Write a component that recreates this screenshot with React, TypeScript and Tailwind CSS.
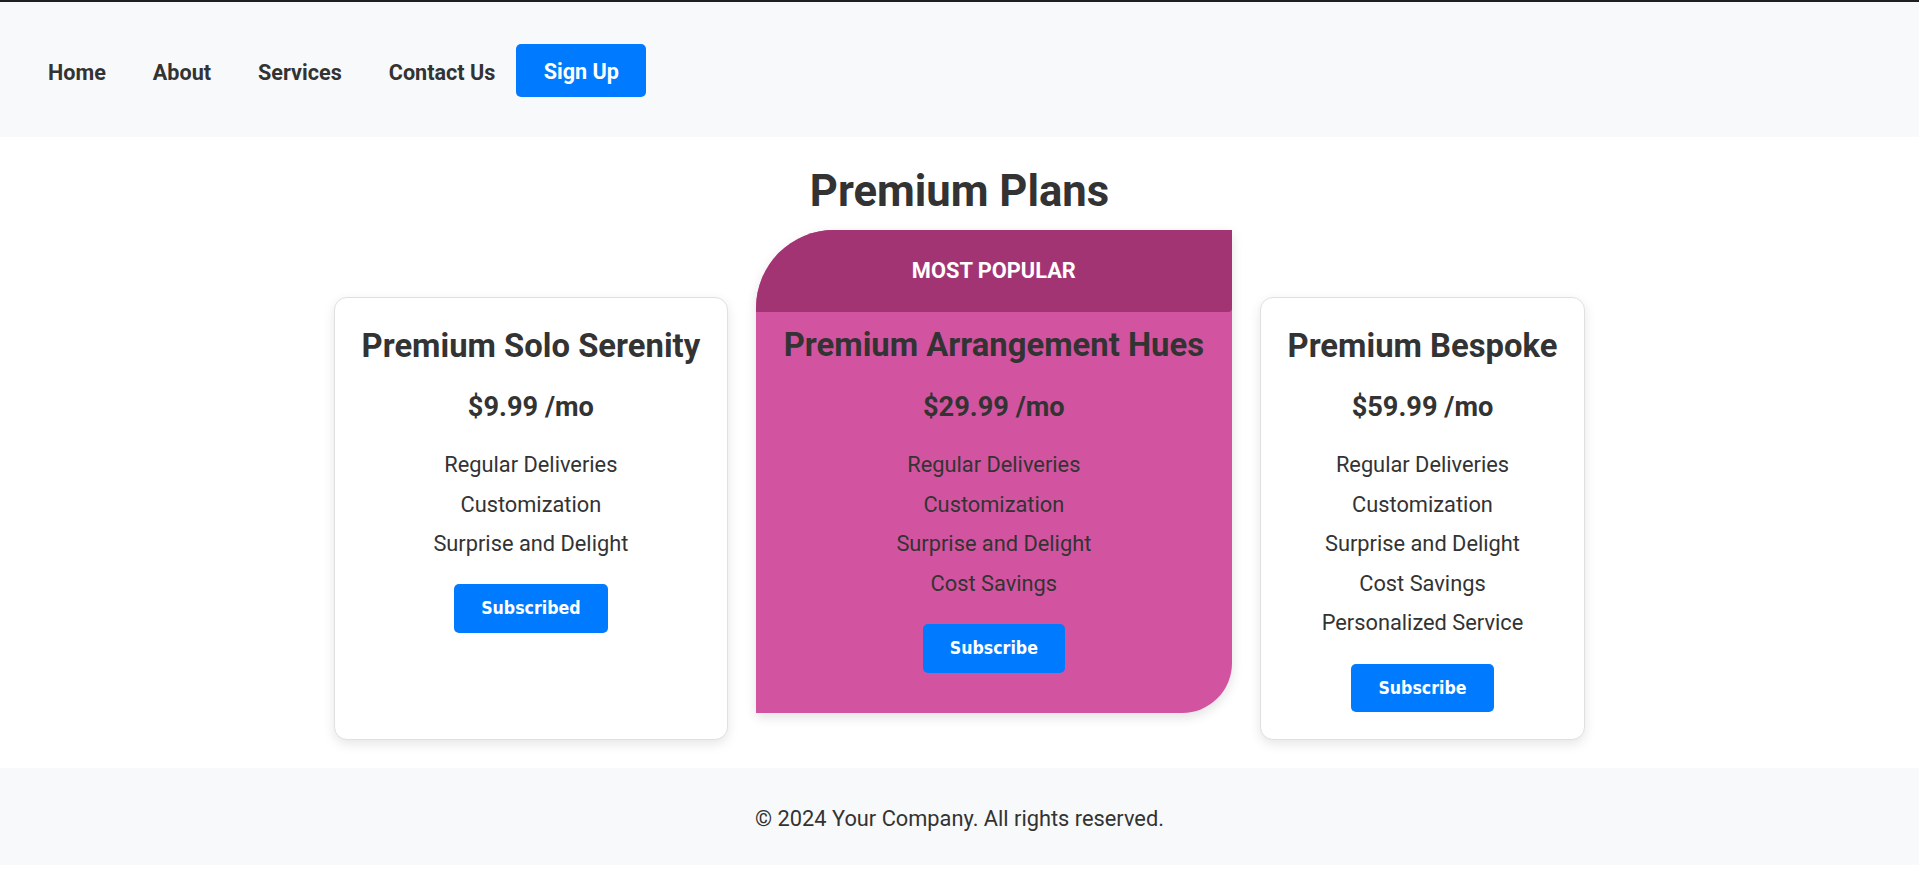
import React from 'react';

interface Plan {
  name: string;
  price: string;
  features: string[];
  button: string;
  popular?: boolean;
}

const plans: Plan[] = [
  {
    name: 'Premium Solo Serenity',
    price: '$9.99 /mo',
    features: ['Regular Deliveries', 'Customization', 'Surprise and Delight'],
    button: 'Subscribed',
  },
  {
    name: 'Premium Arrangement Hues',
    price: '$29.99 /mo',
    features: ['Regular Deliveries', 'Customization', 'Surprise and Delight', 'Cost Savings'],
    button: 'Subscribe',
    popular: true,
  },
  {
    name: 'Premium Bespoke',
    price: '$59.99 /mo',
    features: ['Regular Deliveries', 'Customization', 'Surprise and Delight', 'Cost Savings', 'Personalized Service'],
    button: 'Subscribe',
  },
];

function PlanBody({ plan }: { plan: Plan }) {
  return (
    <>
      <h3 className="text-[32.8px] font-bold leading-[38px] whitespace-nowrap">{plan.name}</h3>
      <p className="mt-[27.7px] text-[27.2px] font-bold leading-[31.6px]">{plan.price}</p>
      <ul className="mt-[21.2px]">
        {plan.features.map((f) => (
          <li key={f} className="leading-[39.6px] whitespace-nowrap">{f}</li>
        ))}
      </ul>
      <button className="mt-[20.7px] h-[48.5px] px-[27px] rounded-[5px] bg-[#007bff] text-white text-[17.6px] font-bold font-['DejaVu_Sans_Condensed','DejaVu_Sans',sans-serif]">
        {plan.button}
      </button>
    </>
  );
}

function PlanCard({ plan }: { plan: Plan }) {
  if (plan.popular) {
    return (
      <div className="flex flex-col items-center bg-[#d254a0] rounded-tl-[78px] rounded-br-[50px] shadow-[0_4px_12px_rgba(0,0,0,0.12)] pb-[40px] overflow-hidden">
        <div className="w-full h-[81.7px] flex items-center justify-center bg-[#a33474] rounded-br-[4px] text-white font-bold uppercase">
          Most Popular
        </div>
        <div className="px-[27.5px] pt-[14.8px] flex flex-col items-center">
          <PlanBody plan={plan} />
        </div>
      </div>
    );
  }
  return (
    <div className="mt-[67px] h-[443px] flex flex-col items-center bg-white border border-[#e0e0e0] rounded-[13px] shadow-[0_4px_12px_rgba(0,0,0,0.1)] px-[27px] pt-[28.5px]">
      <PlanBody plan={plan} />
    </div>
  );
}

export default function App() {
  const links = ['Home', 'About', 'Services', 'Contact Us'];
  return (
    <div className="min-h-[883px] bg-white text-[#333] text-[21.8px] font-['Roboto',sans-serif] text-center">
      <div className="h-[2px] bg-[#1f1f1f]" />
      <header className="h-[135px] bg-[#f8f9fa] flex items-center pl-[48px] pt-[2px]">
        <nav className="flex items-center font-bold text-[21.6px]">
          {links.map((l, i) => (
            <a key={l} href="#" className={i === links.length - 1 ? 'mr-[21px] pt-[5px]' : 'mr-[47px] pt-[5px]'}>
              {l}
            </a>
          ))}
          <a href="#" className="w-[130px] h-[53px] pt-[4px] flex items-center justify-center rounded-[5px] bg-[#007bff] text-white">
            Sign Up
          </a>
        </nav>
      </header>

      <main className="flex flex-col items-center">
        <h2 className="mt-[29px] text-[43.6px] font-bold leading-[51px]">Premium Plans</h2>
        <div className="mt-[13px] flex items-start gap-[28px]">
          {plans.map((p) => (
            <PlanCard key={p.name} plan={p} />
          ))}
        </div>
      </main>

      <footer className="mt-[28px] h-[97px] pt-[5px] bg-[#f8f9fa] flex items-center justify-center">
        <p>© 2024 Your Company. All rights reserved.</p>
      </footer>
    </div>
  );
}
